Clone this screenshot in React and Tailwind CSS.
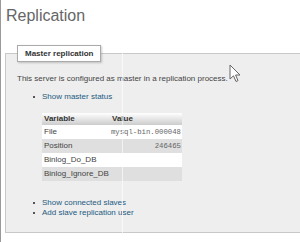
import React from 'react';

const rows = [
  { name: 'File', value: 'mysql-bin.000048' },
  { name: 'Position', value: '246465' },
  { name: 'Binlog_Do_DB', value: '' },
  { name: 'Binlog_Ignore_DB', value: '' },
];

const Bullet = ({ children }) => (
  <li className="flex items-center h-[10px]">
    <span className="ml-[16px] mr-[7px] w-[2px] h-[2px] bg-[#555]" />
    <a className="text-[#235a81]">{children}</a>
  </li>
);

const App = () => {
  return (
    <div className="relative w-[300px] h-[242px] overflow-hidden bg-white border-l border-[#9a9a9a] font-['Liberation_Sans',Arial,sans-serif] text-[#444]">
      <h2 className="pl-[5px] pt-[6px] text-[16px] leading-[20px] text-[#666]">Replication</h2>

      {/* Master replication fieldset */}
      <fieldset className="mt-[19px] ml-[4px] w-[320px] h-[188px] border border-[#c8c8c8] bg-[#eeeeee] px-[11px] pb-[19px] text-[8px]">
        <legend className="px-[7px] h-[17px] leading-[15px] bg-white border border-[#aaa] shadow-[1px_1px_2px_rgba(0,0,0,0.2)] font-bold text-[#333]">
          Master replication
        </legend>

        <p className="mt-[12px] leading-[10px]">
          This server is configured as master in a replication process.
        </p>

        <ul className="mt-[8px] leading-[10px]">
          <Bullet>Show master status</Bullet>
        </ul>

        <table className="mt-[11px] ml-[25px] w-[140px] border-collapse">
          <thead>
            <tr className="h-[12px] bg-gradient-to-b from-white to-[#cccccc] text-[#333]">
              <th className="w-[67px] pl-[2px] text-left font-bold leading-[12px]">Variable</th>
              <th className="pl-[3px] text-left font-bold leading-[12px]">Value</th>
            </tr>
          </thead>
          <tbody>
            {rows.map((r, i) => (
              <tr key={r.name} className={`h-[14px] ${i % 2 ? 'bg-[#dfdfdf]' : 'bg-white'}`}>
                <td className="pl-[2px] leading-[14px]">{r.name}</td>
                <td className="pr-[1px] text-right leading-[14px] font-['Liberation_Mono',monospace] text-[7.3px] text-[#666]">
                  {r.value}
                </td>
              </tr>
            ))}
          </tbody>
        </table>

        <ul className="mt-[17px] leading-[10px]">
          <Bullet>Show connected slaves</Bullet>
          <Bullet>Add slave replication user</Bullet>
        </ul>
      </fieldset>

      {/* faint screen artifact line */}
      <div className="absolute left-[121px] top-[53px] w-px h-[182px] bg-white/60" />

      {/* mouse cursor */}
      <svg className="absolute left-[228px] top-[64px]" width="13" height="19" viewBox="0 0 13 19">
        <path
          d="M1 1 L1 15 L4.5 11.8 L7 17.5 L9 16.6 L6.6 11 L11 11 Z"
          fill="#fff"
          stroke="#666"
          strokeWidth="1"
          strokeLinejoin="round"
        />
      </svg>
    </div>
  );
};

export default App;
